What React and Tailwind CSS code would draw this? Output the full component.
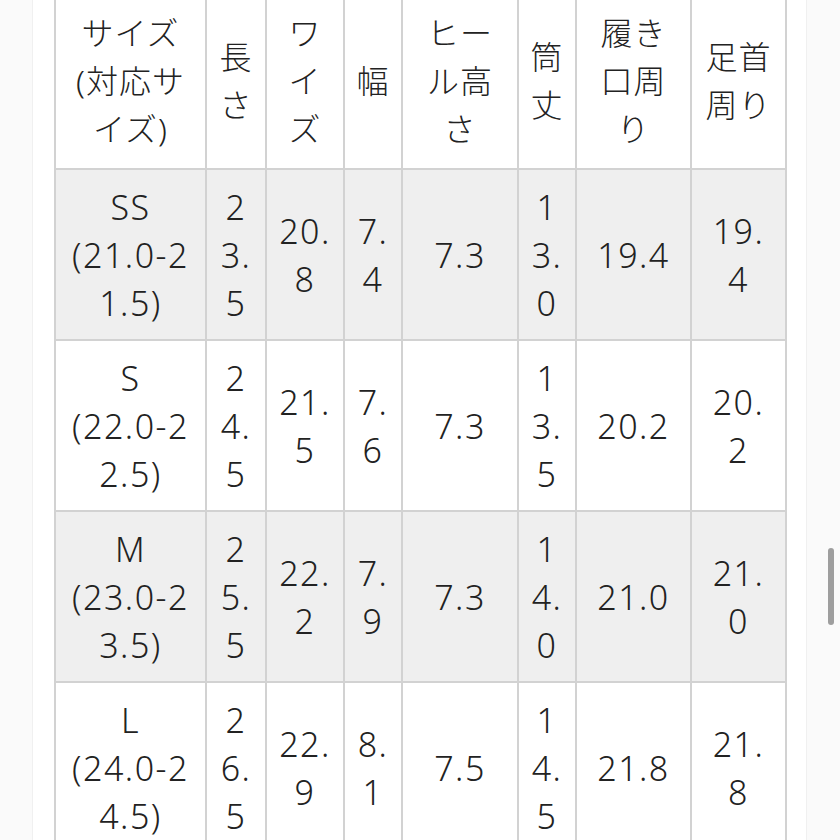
import React from 'react';

const header = ['サイズ|(対応サ|イズ)', '長|さ', 'ワ|イ|ズ', '幅', 'ヒー|ル高|さ', '筒|丈', '履き|口周|り', '足首|周り'];

const rows = [
  ['SS|(21.0-2|1.5)', '2|3.|5', '20.|8', '7.|4', '7.3', '1|3.|0', '19.4', '19.|4'],
  ['S|(22.0-2|2.5)', '2|4.|5', '21.|5', '7.|6', '7.3', '1|3.|5', '20.2', '20.|2'],
  ['M|(23.0-2|3.5)', '2|5.|5', '22.|2', '7.|9', '7.3', '1|4.|0', '21.0', '21.|0'],
  ['L|(24.0-2|4.5)', '2|6.|5', '22.|9', '8.|1', '7.5', '1|4.|5', '21.8', '21.|8'],
];

const colWidths = ['w-[151px]', 'w-[60px]', 'w-[78px]', 'w-[58px]', 'w-[116px]', 'w-[58px]', 'w-[115px]', 'w-[95px]'];

function Lines({ text }) {
  return text.split('|').map((line, i) => (
    <span key={i} className="block whitespace-nowrap">
      {line}
    </span>
  ));
}

function App() {
  return (
    <div
      className="relative flex h-[840px] w-[840px] overflow-hidden bg-white text-[#222]"
      style={{ fontFamily: '"Noto Sans", "Noto Sans CJK JP", sans-serif' }}
    >
      {/* page edges */}
      <div className="w-[33px] shrink-0 bg-[#fafafa] border-r border-[#f0f0f0]" />

      <div className="flex-1 pl-[21px]">
        <table className="table-fixed border-collapse w-[731px] -mt-[8px]">
          <colgroup>
            {colWidths.map((w, i) => (
              <col key={i} className={w} />
            ))}
          </colgroup>
          <thead>
            <tr className="h-[176px] bg-white">
              {header.map((h, i) => (
                <th
                  key={i}
                  className="border-2 border-[#d2d2d2] px-[10px] text-center align-middle font-light text-[32px] leading-[48px] tracking-[1px]"
                >
                  <Lines text={h} />
                </th>
              ))}
            </tr>
          </thead>
          <tbody>
            {rows.map((row, r) => (
              <tr key={r} className={r % 2 === 0 ? 'h-[171px] bg-[#efefef]' : 'h-[171px] bg-white'}>
                {row.map((cell, i) => (
                  <td
                    key={i}
                    className="border-2 border-[#d2d2d2] px-[10px] text-center align-middle font-light text-[34px] leading-[48px] tracking-[1.5px]"
                  >
                    <Lines text={cell} />
                  </td>
                ))}
              </tr>
            ))}
          </tbody>
        </table>
      </div>

      <div className="w-[34px] shrink-0 bg-[#fafafa] border-l border-[#f0f0f0]" />

      {/* scrollbar thumb */}
      <div className="absolute left-[828px] top-[548px] h-[77px] w-[6px] rounded-full bg-[#9e9e9e]" />
    </div>
  );
}

export default App;
